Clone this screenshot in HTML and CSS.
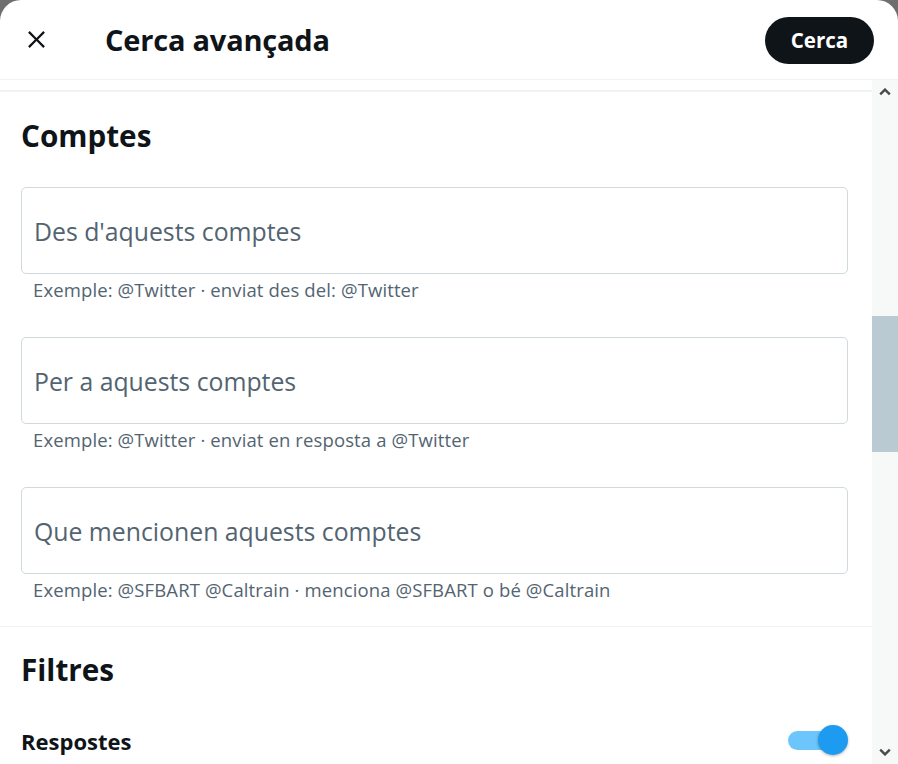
FILE: index.html
```html
<!DOCTYPE html>
<html lang="ca">
<head>
<meta charset="utf-8">
<title>Cerca avançada</title>
<link rel="stylesheet" href="styles.css">
</head>
<body>
<div class="backdrop">
  <div class="modal">
    <header class="header">
      <button class="close" aria-label="Tanca">
        <svg viewBox="0 0 24 24" width="27" height="27"><path d="M10.59 12L4.54 5.96l1.42-1.42L12 10.59l6.04-6.05 1.42 1.42L13.41 12l6.05 6.04-1.42 1.42L12 13.41l-6.04 6.05-1.42-1.42L10.59 12z" fill="#0f1419"/></svg>
      </button>
      <h1 class="title">Cerca avançada</h1>
      <button class="search-btn">Cerca</button>
    </header>
    <div class="body">
      <div class="content">
        <div class="prev-section"></div>
        <section class="section accounts">
          <h2 class="section-title">Comptes</h2>
          <div class="field">
            <div class="input">Des d'aquests comptes</div>
            <div class="hint">Exemple: @Twitter · enviat des del: @Twitter</div>
          </div>
          <div class="field">
            <div class="input">Per a aquests comptes</div>
            <div class="hint">Exemple: @Twitter · enviat en resposta a @Twitter</div>
          </div>
          <div class="field">
            <div class="input">Que mencionen aquests comptes</div>
            <div class="hint">Exemple: @SFBART @Caltrain · menciona @SFBART o bé @Caltrain</div>
          </div>
        </section>
        <section class="section filters">
          <h2 class="section-title">Filtres</h2>
          <div class="row">
            <span class="row-label">Respostes</span>
            <span class="toggle"><span class="toggle-track"></span><span class="toggle-knob"></span></span>
          </div>
        </section>
      </div>
      <div class="scrollbar">
        <div class="sb-arrow up"><svg viewBox="0 0 10 6" width="12" height="8"><path d="M1 5L5 1l4 4" fill="none" stroke="#4a4a4a" stroke-width="2"/></svg></div>
        <div class="sb-track">
          <div class="sb-thumb"></div>
        </div>
        <div class="sb-arrow down"><svg viewBox="0 0 10 6" width="12" height="8"><path d="M1 1l4 4 4-4" fill="none" stroke="#4a4a4a" stroke-width="2"/></svg></div>
      </div>
    </div>
  </div>
</div>
</body>
</html>
```
FILE: styles.css
```css
* { box-sizing: border-box; }
html, body { margin: 0; padding: 0; }
body {
  width: 898px;
  height: 764px;
  overflow: hidden;
  background: #6e6e6e;
  font-family: "Open Sans", "Liberation Sans", Arial, sans-serif;
  color: #0f1419;
}
.backdrop { width: 898px; height: 764px; }
.modal {
  width: 898px;
  height: 764px;
  background: #fff;
  border-radius: 21px 21px 0 0;
  display: flex;
  flex-direction: column;
  overflow: hidden;
}
.header {
  height: 80px;
  flex: none;
  display: flex;
  align-items: center;
  padding: 0 24px 0 21px;
  border-bottom: 1px solid #eff3f4;
}
.close {
  width: 30px;
  height: 30px;
  border: 0;
  background: none;
  padding: 0;
  display: flex;
  align-items: center;
  justify-content: center;
  margin-top: -1px;
}
.title {
  margin: 0 0 0 54px;
  font-size: 29px;
  font-weight: 700;
  flex: 1;
  letter-spacing: -0.2px;
}
.search-btn {
  width: 109px;
  height: 47px;
  border: 0;
  border-radius: 24px;
  background: #0f1419;
  color: #fff;
  font-family: inherit;
  font-size: 20.5px;
  font-weight: 700;
  margin-top: 1px;
}
.body {
  flex: 1;
  display: flex;
  min-height: 0;
}
.content {
  flex: 1;
  overflow: hidden;
}
.prev-section {
  height: 12px;
  border-bottom: 2px solid #eff3f4;
}
.section {
  padding: 0 24px 0 21px;
}
.accounts {
  border-bottom: 1px solid #eff3f4;
  padding-bottom: 18px;
}
.section-title {
  margin: 0;
  font-size: 29.7px;
  font-weight: 700;
  height: 87px;
  display: flex;
  align-items: center;
  padding-top: 0;
}
.accounts .section-title { margin-bottom: 8px; }
.field { margin-bottom: 29px; }
.field:last-child { margin-bottom: 0; }
.input {
  height: 87px;
  border: 1px solid #cfd9de;
  border-radius: 5px;
  display: flex;
  align-items: center;
  padding: 0 13px 0 12px;
  font-size: 24.8px;
  color: #536471;
}
.hint {
  font-size: 18.5px;
  letter-spacing: 0.12px;
  color: #536471;
  padding: 3px 12px 0;
  height: 34px;
}
.filters .section-title { height: 84px; padding-top: 0; }
.row {
  height: 60px;
  display: flex;
  align-items: center;
  justify-content: space-between;
  margin-top: 0;
}
.row-label {
  font-size: 22px;
  font-weight: 700;
}
.toggle {
  position: relative;
  width: 62px;
  height: 32px;
  margin-right: -2px;
}
.toggle-track {
  position: absolute;
  left: 0;
  top: 6px;
  width: 54px;
  height: 19px;
  border-radius: 10px;
  background: #6cc5fb;
}
.toggle-knob {
  position: absolute;
  right: 2px;
  top: 0;
  width: 30px;
  height: 30px;
  border-radius: 50%;
  background: #1d9bf0;
  box-shadow: 0 1px 3px rgba(0,0,0,0.3);
}
.scrollbar {
  width: 26px;
  flex: none;
  background: #f7f9f9;
  display: flex;
  flex-direction: column;
}
.sb-arrow {
  height: 24px;
  display: flex;
  align-items: center;
  justify-content: center;
  flex: none;
}
.sb-track { flex: 1; padding-top: 212px; }
.sb-thumb {
  height: 136px;
  background: #b9cad3;
}
```
